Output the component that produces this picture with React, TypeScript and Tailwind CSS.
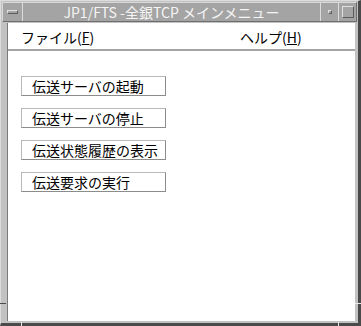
const actions = ['伝送サーバの起動', '伝送サーバの停止', '伝送状態履歴の表示', '伝送要求の実行'];

function TitleBar() {
  return (
    <div className="mx-[1px] mt-[1px] flex h-[20px] border border-t-[#d8d8d8] border-l-[#d8d8d8] border-b-[#6e6e6e] border-r-[#6e6e6e] bg-[#a4a4a4]">
      {/* window menu button */}
      <div className="flex w-[20px] items-center justify-center border-r border-r-[#dcdcdc]">
        <div className="h-[4px] w-[11px] border border-t-[#e0e0e0] border-l-[#e0e0e0] border-b-[#5c5c5c] border-r-[#5c5c5c] bg-[#a4a4a4]" />
      </div>
      <div className="flex flex-1 items-center justify-center text-[14px] leading-none text-[#f4f4f4]">
        JP1/FTS -全銀TCP メインメニュー
      </div>
      {/* minimize */}
      <div className="flex w-[18px] items-center justify-center border-l border-l-[#dcdcdc]">
        <div className="h-[4px] w-[4px] border border-t-[#e0e0e0] border-l-[#e0e0e0] border-b-[#5c5c5c] border-r-[#5c5c5c] bg-[#a4a4a4]" />
      </div>
      {/* maximize */}
      <div className="flex w-[18px] items-center justify-center border-l border-l-[#dcdcdc]">
        <div className="h-[12px] w-[12px] border border-t-[#e0e0e0] border-l-[#e0e0e0] border-b-[#5c5c5c] border-r-[#5c5c5c] bg-[#a4a4a4]" />
      </div>
    </div>
  );
}

function MenuBar() {
  return (
    <div className="flex h-[26px] items-center bg-white pl-[13px] pt-[1px] text-[14px] leading-none text-black">
      <span className="w-[219px]">
        ファイル(<span className="underline">F</span>)
      </span>
      <span>
        ヘルプ(<span className="underline">H</span>)
      </span>
    </div>
  );
}

export default function App() {
  return (
    <div className="relative flex h-[326px] w-[361px] flex-col border-t border-l border-t-[#dcdcdc] border-l-[#dcdcdc] border-r-[3px] border-b-[3px] border-r-[#4a4a4a] border-b-[#4a4a4a] bg-[#c2c2c2] font-['Noto_Sans_CJK_JP','DejaVu_Sans',sans-serif]">
      <TitleBar />
      <div className="mb-[2px] ml-[6px] mr-[3px] mt-[1px] flex flex-1 flex-col border-l border-l-[#7a7a7a] bg-white">
        <MenuBar />
        <div className="h-[2px] bg-[#a4a4a4]" />
        <div className="flex flex-col gap-[12px] pl-[13px] pt-[25px]">
          {actions.map((label) => (
            <button
              key={label}
              className="flex h-[20px] w-[145px] items-center border border-t-[#b8b8b8] border-l-[#b8b8b8] border-b-[#8c8c8c] border-r-[#8c8c8c] bg-white pl-[10px] text-left text-[14px] leading-none text-black"
            >
              {label}
            </button>
          ))}
        </div>
      </div>
      {/* resize handle ticks */}
      <div className="absolute left-[-1px] top-[302px] h-[1px] w-[6px] bg-[#4a4a4a]" />
      <div className="absolute right-[-3px] top-[302px] h-[1px] w-[6px] bg-[#e8e8e8]" />
      <div className="absolute bottom-[-3px] left-[337px] h-[4px] w-[1px] bg-[#e8e8e8]" />
      <div className="absolute bottom-[-3px] left-[20px] h-[4px] w-[1px] bg-[#e8e8e8]" />
    </div>
  );
}
